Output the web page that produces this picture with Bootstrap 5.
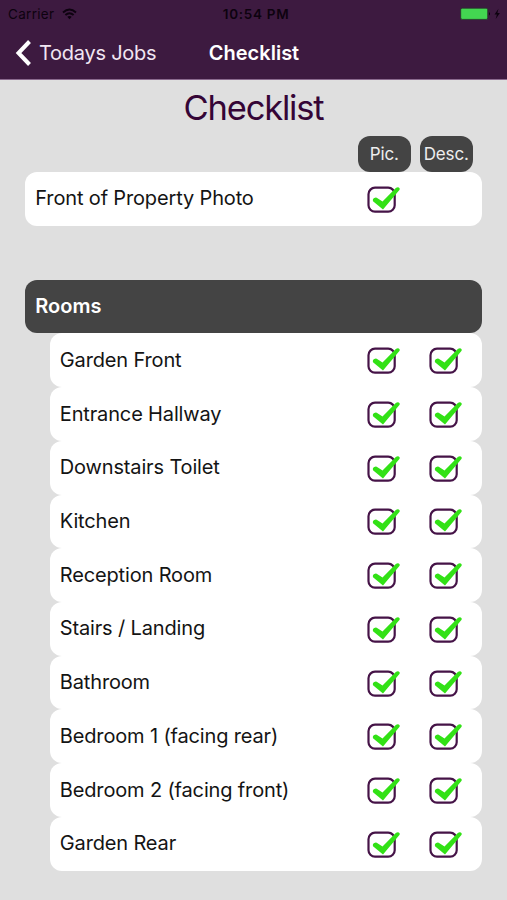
<!DOCTYPE html>
<html lang="en">
<head>
<meta charset="utf-8">
<meta name="viewport" content="width=device-width, initial-scale=1">
<title>Checklist</title>
<link href="https://cdn.jsdelivr.net/npm/bootstrap@5.3.0/dist/css/bootstrap.min.css" rel="stylesheet">
<style>
body{background:#dfdfdf;font-family:Inter,"Liberation Sans",sans-serif;color:#141414;height:900px;overflow:hidden}
.topbar{background:#3d1a40;height:79.5px;border-bottom:1px solid #8a6a8e}
.status{height:28px;font-size:13.5px;line-height:28px;color:#0d020f;padding:0 6px 0 8px}
.carrier{letter-spacing:.3px}
.clock{font-weight:600;letter-spacing:.7px;padding-left:3px}
.side{flex:1 1 0}
.titles{height:50px;color:#fff;font-size:20px;line-height:48px;padding:0 15px}
.titles .fw-semibold{padding-left:1px}
.back{color:#f1e6f2;text-decoration:none;letter-spacing:-.25px}
.heading{font-size:34.5px;line-height:56px;height:56px;color:#350536;font-weight:400;letter-spacing:-1.2px}
.list-wrap{padding:0 25px}
.tag{width:52.5px;height:36.5px;border-radius:12px;background:#444;color:#eee;font-size:17px;line-height:37px;letter-spacing:-.15px}
.tags{gap:9.5px;padding-right:9.5px}
.line{height:53.72px;border-radius:12px;background:#fff;font-size:20px;padding:0 9.5px 0 10.3px;letter-spacing:-.15px}
.line .label{padding-bottom:1px}
.checks{gap:9.5px}
.slot{width:52.5px;height:32px}
.section{background:#444;color:#fff;font-weight:600;margin-top:54px;letter-spacing:0}
.rooms{padding-left:24.5px}
</style>
</head>
<body>
<header class="topbar">
  <div class="status d-flex align-items-center">
    <div class="side d-flex align-items-center"><span class="carrier">Carrier</span>
      <svg class="ms-2" width="15" height="12" viewBox="0 0 15 12" fill="none" stroke="#0d020f" stroke-width="1.9"><path d="M1 4.5Q7.500-1.500 14 4.500M3.400 7Q7.500 3.300 11.600 7"/><path d="M5.300 8.800Q7.500 7 9.700 8.800L7.500 11.300Z" fill="#0d020f" stroke="none"/></svg>
    </div>
    <span class="clock">10:54 PM</span>
    <div class="side d-flex align-items-center justify-content-end">
      <svg width="41" height="14" viewBox="0 0 41 14"><rect x=".7" y="1.200" width="27" height="11.200" rx="1.500" fill="#43d651" stroke="#26352a" stroke-width=".8"/><path d="M29 5q2 1.800 0 3.600z" fill="#0d020f"/><path d="M38.500 1.800 34.500 7.500h2.400l-1.200 4.500 4.200-6h-2.500z" fill="#0d020f"/></svg>
    </div>
  </div>
  <nav class="titles d-flex align-items-center">
    <a href="#" class="back side d-flex align-items-center"><svg class="me-2" width="16" height="26" viewBox="0 0 16 26" fill="none" stroke="#fff" stroke-width="4"><path d="M14.500 1.500 3.500 13l11 11.500"/></svg><span>Todays Jobs</span></a>
    <span class="fw-semibold">Checklist</span>
    <span class="side"></span>
  </nav>
</header>
<svg class="d-none"><symbol id="tick" viewBox="0 0 52.500 32"><rect x="10.500" y="4.700" width="26.200" height="24" rx="6.500" fill="none" stroke="#451347" stroke-width="2.200"/><path d="M15 18.200Q14.200 15.800 17 14.800Q18.200 14.300 19.500 15.200L24.500 18.500 37.800 5Q40.300 3.200 41.600 5.300Q42 6.200 41.400 7L25 26.500Z" fill="#32e116"/></symbol></svg>
<main class="list-wrap">
  <h1 class="heading text-center m-0">Checklist</h1>
  <div class="tags d-flex justify-content-end"><div class="tag text-center">Pic.</div><div class="tag text-center">Desc.</div></div>
  <div class="line d-flex align-items-center justify-content-between"><span class="label">Front of Property Photo</span><div class="checks d-flex"><svg class="slot"><use href="#tick"/></svg><span class="slot"></span></div></div>
  <h2 class="line section d-flex align-items-center mb-0"><span class="label">Rooms</span></h2>
  <div class="rooms" id="rooms"></div>
</main>
<script>
const names = ["Garden Front","Entrance Hallway","Downstairs Toilet","Kitchen","Reception Room","Stairs / Landing","Bathroom","Bedroom 1 (facing rear)","Bedroom 2 (facing front)","Garden Rear"];
const tick = '<svg class="slot"><use href="#tick"/></svg>';
document.getElementById("rooms").innerHTML = names.map(n =>
  `<div class="line d-flex align-items-center justify-content-between"><span class="label">${n}</span><div class="checks d-flex">${tick}${tick}</div></div>`).join("");
</script>
<script src="https://cdn.jsdelivr.net/npm/bootstrap@5.3.0/dist/js/bootstrap.bundle.min.js"></script>
</body>
</html>
